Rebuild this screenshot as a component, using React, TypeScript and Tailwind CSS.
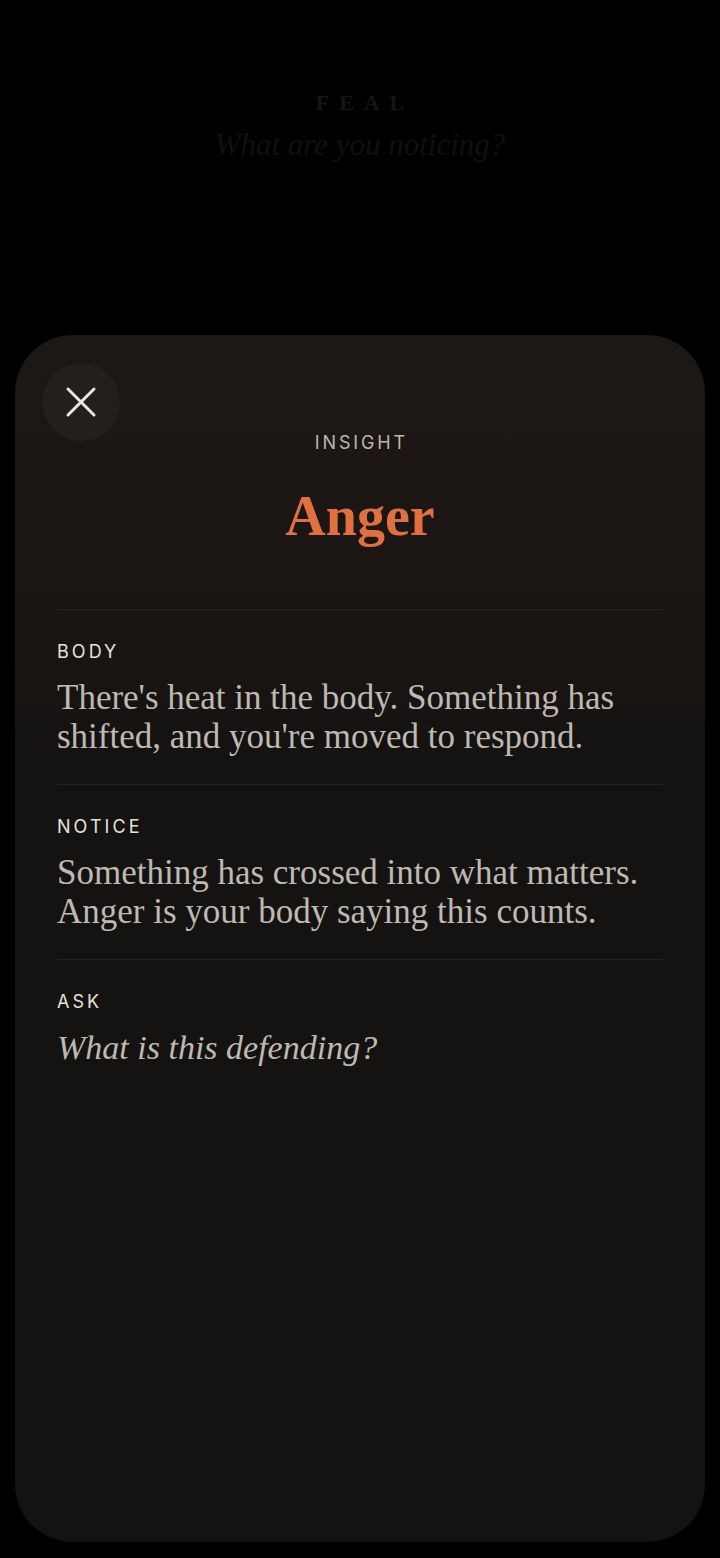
import React from "react";

function Section({ label, text, italic, last }: { label: string; text: string; italic?: boolean; last?: boolean }) {
  return (
    <div className={`pt-[30px] ${last ? "" : "border-b border-[#262320] pb-[28px]"}`}>
      <div className="font-['Inter',sans-serif] text-[18px] leading-[24px] tracking-[0.17em] text-[#e6e2dd]">{label}</div>
      <p
        className={`mt-[14px] font-['Liberation_Serif',serif] leading-[39px] text-[#bfb9b2] ${italic ? "italic text-[34px]" : "text-[35px]"}`}
      >
        {text}
      </p>
    </div>
  );
}

export default function App() {
  return (
    <div className="min-h-[1558px] bg-black flex flex-col items-stretch">
      <div className="flex flex-col items-center pt-[88px]">
        <div className="font-['Liberation_Serif',serif] font-bold text-[22px] leading-[30px] tracking-[0.45em] text-[#151515] pl-[0.45em]">
          FEAL
        </div>
        <div className="font-['Liberation_Serif',serif] italic text-[31px] leading-[40px] text-[#101010] mt-[7px]">
          What are you noticing?
        </div>
      </div>
      <div className="relative mx-[15px] mt-[170px] h-[1207px] rounded-[58px] bg-[linear-gradient(180deg,#1e1815_0%,#1b1613_20%,#151312_34%,#141312_100%)] shadow-[0_6px_14px_rgba(0,0,0,0.6)]">
        <button className="absolute left-[27px] top-[28px] w-[78px] h-[78px] rounded-full bg-[#231f1c] flex items-center justify-center">
          <svg width="34" height="34" viewBox="0 0 34 34" fill="none" stroke="#ebe7e2" strokeWidth="3" strokeLinecap="round">
            <path d="M4 4 L30 30 M30 4 L4 30" />
          </svg>
        </button>
        <div className="px-[42px]">
          <div className="pt-[95px] flex flex-col items-center pb-[63px] border-b border-[#262320]">
            <div className="font-['Inter',sans-serif] text-[18px] leading-[26px] tracking-[0.16em] text-[#bcb7b1] pl-[0.16em]">
              INSIGHT
            </div>
            <div className="mt-[30px] font-['Liberation_Serif',serif] font-bold text-[56px] leading-[60px] text-[#e0703f]">
              Anger
            </div>
          </div>
          <Section label="BODY" text="There's heat in the body. Something has shifted, and you're moved to respond." />
          <Section label="NOTICE" text="Something has crossed into what matters. Anger is your body saying this counts." />
          <Section label="ASK" text="What is this defending?" italic last />
        </div>
      </div>
    </div>
  );
}
